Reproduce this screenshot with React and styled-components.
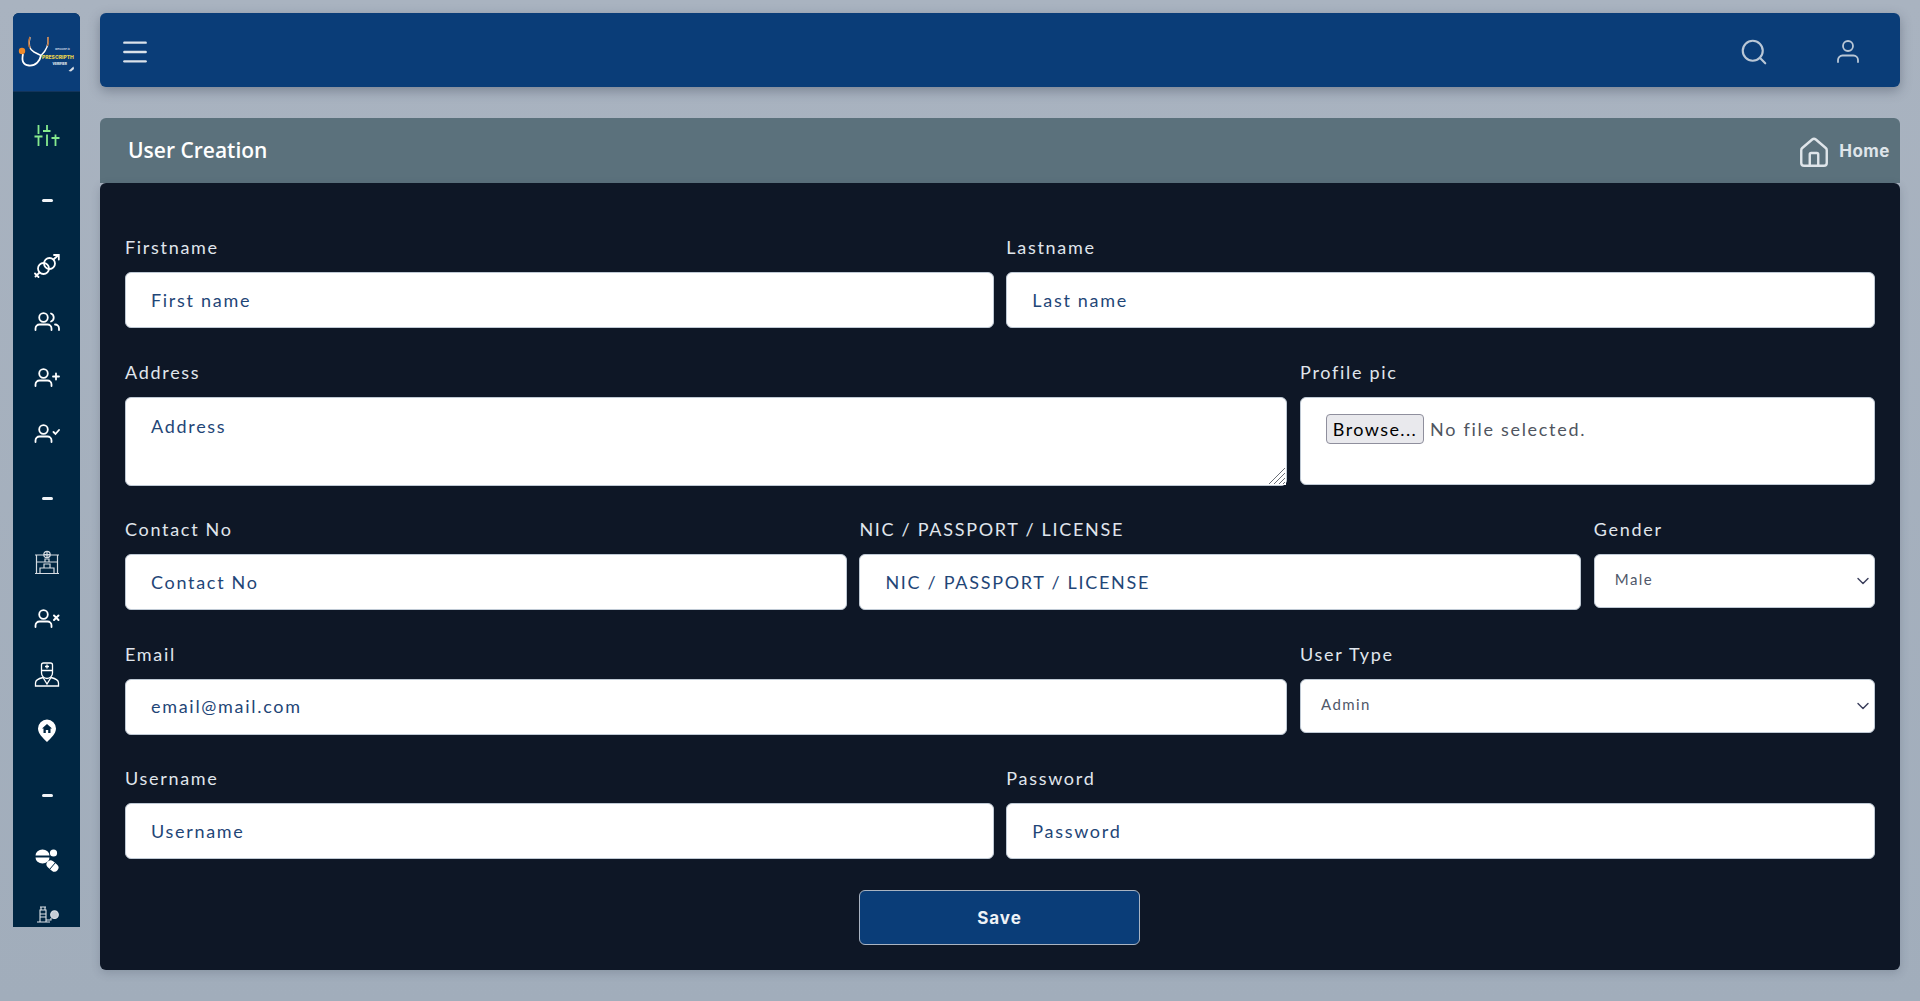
import React from 'react';
import styled, { createGlobalStyle } from 'styled-components';
import { Menu, Search, House, ChevronDown } from 'lucide-react';

const GlobalStyle = createGlobalStyle`
  * { box-sizing: border-box; }
  html, body { margin: 0; height: 100%; }
  body {
    background: linear-gradient(180deg, #a9b3c0 0%, #a1adbb 100%);
    font-family: "Lato", "Open Sans", sans-serif;
    overflow: hidden;
  }
`;

const Page = styled.div`
  display: flex;
  gap: 20px;
  padding: 13px 20px 0 13px;
  height: 1001px;
`;

const Sidebar = styled.aside`
  width: 67px;
  height: 914px;
  flex: none;
  display: flex;
  flex-direction: column;
  overflow: hidden;
  background: #002642;
  border-radius: 6px 6px 0 0;
`;

const LogoBox = styled.div`
  height: 79px;
  flex: none;
  background: #0a3d78;
  border-bottom: 1px solid #12345a;
`;

const Nav = styled.nav`
  display: flex;
  flex-direction: column;
  padding-top: 15px;
  color: #fff;
`;

const NavItem = styled.div`
  height: 56px;
  flex: none;
  display: flex;
  align-items: center;
  justify-content: center;
  color: ${(p) => p.$color || '#fff'};
`;

const NavDash = styled.div`
  height: ${(p) => p.$h || 73}px;
  flex: none;
  display: flex;
  align-items: center;
  justify-content: center;
  &::before {
    content: '';
    width: 11px;
    height: 3px;
    margin-left: 1px;
    border-radius: 2px;
    background: #f1f4f7;
  }
`;

const Main = styled.main`
  flex: 1;
  min-width: 0;
  display: flex;
  flex-direction: column;
`;

const Topbar = styled.header`
  height: 74px;
  flex: none;
  display: flex;
  align-items: center;
  justify-content: space-between;
  padding: 3px 39px 0 19px;
  background: #0a3d78;
  border-radius: 6px;
  box-shadow: 0 4px 12px rgba(40, 50, 70, 0.35);
`;

const TopIcons = styled.div`
  display: flex;
  align-items: center;
  gap: 66px;
  color: #b9c7d6;
`;

const PageHeader = styled.div`
  height: 65px;
  margin-top: 31px;
  flex: none;
  display: flex;
  align-items: center;
  justify-content: space-between;
  padding: 0 10px 0 28px;
  background: #5b717c;
  border-radius: 6px 6px 0 0;
`;

const Title = styled.h1`
  margin: 0 0 2px;
  font-family: "Open Sans", sans-serif;
  font-size: 21px;
  font-weight: 600;
  color: #fff;
`;

const Crumb = styled.div`
  display: flex;
  align-items: center;
  gap: 8px;
  font-family: "Inter", sans-serif;
  font-size: 17px;
  font-weight: 700;
  letter-spacing: 0.5px;
  color: #dfe5ea;
  svg {
    margin-top: 4px;
  }
`;

const Card = styled.section`
  height: 787px;
  flex: none;
  padding: 53px 25px 0;
  background: #0e1726;
  border-radius: 6px;
  box-shadow: 0 3px 10px rgba(40, 50, 70, 0.2);
`;

const Form = styled.form`
  display: grid;
  grid-template-columns: repeat(12, 1fr);
  column-gap: 12.6px;
  row-gap: 32.5px;
`;

const Field = styled.div`
  grid-column: span ${(p) => p.$span};
  min-width: 0;
`;

const Label = styled.label`
  display: block;
  height: 36px;
  font-size: 18px;
  line-height: 22px;
  letter-spacing: 1.7px;
  color: #e0e6ed;
`;

const controlBase = `
  display: block;
  width: 100%;
  background: #fff;
  border: 1px solid #bfc9d4;
  border-radius: 6px;
  font-family: "Lato", "Open Sans", sans-serif;
  letter-spacing: 1.7px;
  outline: none;
`;

const Input = styled.input`
  ${controlBase}
  height: 56px;
  padding: 0 25px 1px;
  font-size: 18px;
  color: #1b3f70;
  &::placeholder {
    color: #1f4677;
    opacity: 1;
  }
`;

const TextAreaWrap = styled.div`
  position: relative;
  height: 89px;
`;

const TextArea = styled.textarea`
  ${controlBase}
  height: 89px;
  padding: 17px 25px;
  font-size: 18px;
  line-height: 22px;
  color: #1b3f70;
  resize: vertical;
  &::placeholder {
    color: #1f4677;
    opacity: 1;
  }
`;

const ResizeGrip = styled.svg`
  position: absolute;
  right: 1px;
  bottom: 1px;
  pointer-events: none;
`;

const FileBox = styled.div`
  ${controlBase}
  height: 88px;
  padding: 16px 25px;
  display: flex;
  align-items: flex-start;
  gap: 6px;
  font-size: 18px;
  line-height: 30px;
  color: #4f5560;
`;

const BrowseButton = styled.button`
  height: 30px;
  width: 98px;
  padding: 0;
  background: #e9e9ed;
  border: 1px solid #8f8f9d;
  border-radius: 4px;
  font-family: "Lato", "Open Sans", sans-serif;
  font-size: 18px;
  letter-spacing: 1.4px;
  color: #000;
`;

const SelectWrap = styled.div`
  position: relative;
  height: 54px;
  color: #3b3f5c;
  svg {
    position: absolute;
    right: 2px;
    top: 17px;
    pointer-events: none;
  }
`;

const Select = styled.select`
  ${controlBase}
  height: 54px;
  padding: 0 24px 4px 20px;
  appearance: none;
  font-size: 15px;
  letter-spacing: 1.4px;
  color: #50586a;
`;

const Actions = styled.div`
  grid-column: 1 / -1;
  display: flex;
  justify-content: center;
  margin-top: -1.5px;
`;

const SaveButton = styled.button`
  width: 281px;
  height: 55px;
  margin-right: 1px;
  background: #0a3d78;
  border: 1px solid #a9b4c2;
  border-radius: 6px;
  font-family: "Inter", sans-serif;
  font-size: 17px;
  font-weight: 700;
  letter-spacing: 1px;
  color: #eef2f6;
`;

const Logo = () => (
  <svg width="67" height="79" viewBox="13 13 67 79" aria-hidden="true">
    <path d="M23 54c-1.500 7 0 11 6 11.500 7 .5 11-5 12-10" fill="none" stroke="#fff" strokeWidth="1.800" />
    <path d="M30 37c-2 8 0 13 4 15l7 3.500" fill="none" stroke="#fff" strokeWidth="1.400" />
    <path d="M48 37c1 7-1 13-7 18.500" fill="none" stroke="#fff" strokeWidth="1.400" />
    <path d="M30 37c-1.500 4-1.500 8 0 11M48 37c.5 3 .5 6-.5 9" fill="none" stroke="#b9733f" strokeWidth="1.600" />
    <circle cx="22" cy="51" r="3.200" fill="#ef8b2c" />
    <text x="42" y="59" fontSize="5" fontWeight="800" fontFamily="Inter, sans-serif" fill="#e8d44d">PRESCRIPTH</text>
    <text x="52.500" y="64.500" fontSize="3.200" fontWeight="800" fontFamily="Inter, sans-serif" fill="#e6edf5">VERIFIER</text>
    <text x="55" y="50" fontSize="2.600" fontWeight="700" fontStyle="italic" fontFamily="Inter, sans-serif" fill="#c9d6e4">Welcome to</text>
    <path d="M68.500 71l5-4.500 .5 2.500-3 2.500z" fill="#d8dee6" />
  </svg>
);

const SlidersIcon = () => (
  <svg width="26" height="26" viewBox="0 0 26 26" fill="none" stroke="currentColor" strokeWidth="1.800" aria-hidden="true">
    <path d="M4.500 3v9M4.500 14.500V24M.5 14.500h8" />
    <path d="M13 3v6M13 12.500V24M9 9h7.500" />
    <path d="M21.500 12.500V16M21.500 16v8M17.500 16h8" />
  </svg>
);

// sidebar person with a small mark next to it
const PersonIcon = ({ children }) => (
  <svg width="26" height="26" viewBox="0 0 26 26" fill="none" stroke="currentColor" strokeWidth="1.800" strokeLinecap="round" aria-hidden="true">
    <circle cx="9.500" cy="8.500" r="4.300" />
    <path d="M1.500 21v-1.500a4 4 0 0 1 4-4h8a4 4 0 0 1 4 4V21" />
    {children}
  </svg>
);

const GenderIcon = () => (
  <svg width="26" height="26" viewBox="0 0 26 26" fill="none" stroke="currentColor" strokeWidth="1.800" strokeLinecap="round" aria-hidden="true">
    <circle cx="9.500" cy="15.500" r="5.500" />
    <circle cx="15.500" cy="10.500" r="5.500" />
    <path d="M19.500 6.500l5-4.500M20 2h4.800v4.500M5.500 19.500l-4 4M1 20.500l3.500 3.500" />
  </svg>
);

const HospitalIcon = () => (
  <svg width="26" height="26" viewBox="0 0 26 26" fill="none" stroke="#d5dbe2" strokeWidth="1.200" aria-hidden="true">
    <path d="M1 5h24M2.500 5v18M23.500 5v18M1 23.500h24M2.500 12h21M6 23v-5h14v5" />
    <circle cx="13" cy="4.500" r="3.200" />
    <path d="M11 12v-3h4v3M10 18v-4h6v4M13 1.500v6M10 4.500h6" />
  </svg>
);

const DoctorIcon = () => (
  <svg width="26" height="26" viewBox="0 0 26 26" fill="none" stroke="currentColor" strokeWidth="1.300" aria-hidden="true">
    <path d="M7.500 3a2 2 0 0 1 2-2h7a2 2 0 0 1 2 2V8.500h-11zM7.500 8.500V11a5.500 5.500 0 0 0 11 0V8.500" />
    <path d="M13 2.500v4M11 4.500h4" />
    <path d="M1.500 24v-3c0-3 3-4.500 7.500-5.500l4 6.500 4-6.500c4.500 1 7.500 2.500 7.500 5.500v3z" />
  </svg>
);

const PinIcon = () => (
  <svg width="26" height="26" viewBox="0 0 26 26" aria-hidden="true">
    <path d="M13 1.500a9 9 0 0 1 9 9c0 5-5 9.500-9 13.500-4-4-9-8.500-9-13.500a9 9 0 0 1 9-9z" fill="#fff" />
    <path d="M13 6l5 4.500h-1.500V15h-2.300v-3h-2.400v3H9.500v-4.500H8z" fill="#002642" />
  </svg>
);

const PillsIcon = () => (
  <svg width="26" height="26" viewBox="0 0 26 26" fill="#fff" aria-hidden="true">
    <path d="M1.500 8.500a7 6 0 0 1 14 0z" />
    <path d="M1.500 10.500h14a7 6 0 0 1-14 0z" />
    <circle cx="19.500" cy="6" r="3.600" />
    <rect x="12" y="15" width="13" height="8" rx="4" transform="rotate(40 18.500 19)" />
    <path d="M15.500 22.500l6-7" stroke="#002642" strokeWidth="1" />
  </svg>
);

const LabIcon = () => (
  <svg width="26" height="26" viewBox="0 0 26 26" fill="none" stroke="#dfe4ea" strokeWidth="1.100" aria-hidden="true">
    <path d="M3 19h13M6 4h6M7 4v3h4V4M6 7h6v12H6zM6 11h6M6 14h6M12 17h5v-2" />
    <circle cx="20.500" cy="11.700" r="3.800" fill="#c4ccd5" />
  </svg>
);

const TopUser = () => (
  <svg width="26" height="28" viewBox="0 0 26 28" fill="none" stroke="currentColor" strokeWidth="1.800" strokeLinecap="round" aria-hidden="true">
    <circle cx="13" cy="8" r="5" />
    <path d="M3 24v-2a4.500 4.500 0 0 1 4.500-4.500h11A4.500 4.500 0 0 1 23 22v2" />
  </svg>
);

function App() {
  return (
    <>
      <GlobalStyle />
      <Page>
        <Sidebar>
          <LogoBox>
            <Logo />
          </LogoBox>
          <Nav>
            <NavItem $color="#86ea8e"><SlidersIcon /></NavItem>
            <NavDash $h={75} />
            <NavItem><GenderIcon /></NavItem>
            <NavItem>
              <PersonIcon>
                <path d="M17 4.500a4.300 4.300 0 0 1 0 8M21 15.500a4 4 0 0 1 4 4V21" />
              </PersonIcon>
            </NavItem>
            <NavItem>
              <PersonIcon>
                <path d="M22 8.500v6M19 11.500h6" />
              </PersonIcon>
            </NavItem>
            <NavItem>
              <PersonIcon>
                <path d="M19.500 11l2 2 3.500-4" />
              </PersonIcon>
            </NavItem>
            <NavDash />
            <NavItem><HospitalIcon /></NavItem>
            <NavItem>
              <PersonIcon>
                <path d="M20 9.500l4.500 4.500M24.500 9.500L20 14" strokeWidth="2" />
              </PersonIcon>
            </NavItem>
            <NavItem><DoctorIcon /></NavItem>
            <NavItem><PinIcon /></NavItem>
            <NavDash />
            <NavItem><PillsIcon /></NavItem>
            <NavItem><LabIcon /></NavItem>
          </Nav>
        </Sidebar>
        <Main>
          <Topbar>
            <Menu size={32} strokeWidth={1.8} color="#dbe2ea" />
            <TopIcons>
              <Search size={30} strokeWidth={1.7} />
              <TopUser />
            </TopIcons>
          </Topbar>
          <PageHeader>
            <Title>User Creation</Title>
            <Crumb>
              <House size={34} strokeWidth={1.7} />
              Home
            </Crumb>
          </PageHeader>
          <Card>
            <Form>
              <Field $span={6}>
                <Label>Firstname</Label>
                <Input placeholder="First name" />
              </Field>
              <Field $span={6}>
                <Label>Lastname</Label>
                <Input placeholder="Last name" />
              </Field>
              <Field $span={8}>
                <Label>Address</Label>
                <TextAreaWrap>
                  <TextArea placeholder="Address" />
                  <ResizeGrip width="18" height="18" viewBox="0 0 18 18" aria-hidden="true">
                    <rect width="18" height="18" fill="#fff" />
                    <path d="M1 17L17 1M6 17L17 6M11 17l6-6M15 17l2-2" stroke="#6b7078" strokeWidth="1" />
                  </ResizeGrip>
                </TextAreaWrap>
              </Field>
              <Field $span={4}>
                <Label>Profile pic</Label>
                <FileBox>
                  <BrowseButton type="button">Browse...</BrowseButton>
                  No file selected.
                </FileBox>
              </Field>
              <Field $span={5}>
                <Label>Contact No</Label>
                <Input placeholder="Contact No" />
              </Field>
              <Field $span={5}>
                <Label>NIC / PASSPORT / LICENSE</Label>
                <Input placeholder="NIC / PASSPORT / LICENSE" />
              </Field>
              <Field $span={2}>
                <Label>Gender</Label>
                <SelectWrap>
                  <Select defaultValue="Male">
                    <option>Male</option>
                    <option>Female</option>
                  </Select>
                  <ChevronDown size={20} strokeWidth={1.7} />
                </SelectWrap>
              </Field>
              <Field $span={8}>
                <Label>Email</Label>
                <Input placeholder="email@mail.com" />
              </Field>
              <Field $span={4}>
                <Label>User Type</Label>
                <SelectWrap>
                  <Select defaultValue="Admin">
                    <option>Admin</option>
                    <option>Doctor</option>
                  </Select>
                  <ChevronDown size={20} strokeWidth={1.7} />
                </SelectWrap>
              </Field>
              <Field $span={6}>
                <Label>Username</Label>
                <Input placeholder="Username" />
              </Field>
              <Field $span={6}>
                <Label>Password</Label>
                <Input type="password" placeholder="Password" />
              </Field>
              <Actions>
                <SaveButton type="button">Save</SaveButton>
              </Actions>
            </Form>
          </Card>
        </Main>
      </Page>
    </>
  );
}

export default App;
